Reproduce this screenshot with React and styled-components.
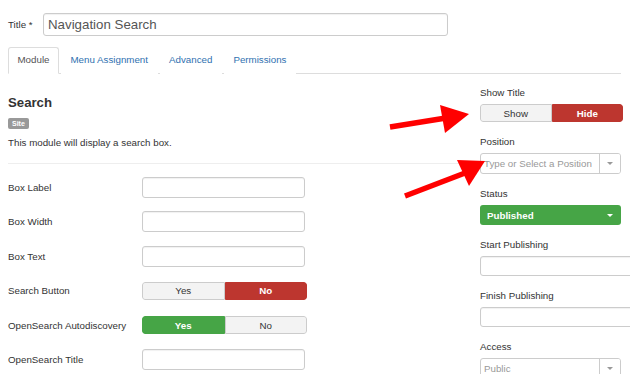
import React from 'react'
import styled, { createGlobalStyle } from 'styled-components'

const GlobalStyle = createGlobalStyle`
  html, body {
    margin: 0;
    padding: 0;
    background: #fff;
  }
  body {
    font-family: "Liberation Sans", Arial, sans-serif;
    color: #333;
  }
`

const Page = styled.div`
  position: relative;
  width: 630px;
  height: 374px;
  overflow: hidden;
  padding: 13px 0 0 8px;
  box-sizing: border-box;
  font-size: 9.75px;
`

const TitleRow = styled.div`
  display: flex;
  align-items: center;
  height: 23px;
`

const TitleLabel = styled.label`
  width: 35px;
  font-size: 9.75px;
  color: #333;
`

const TextInput = styled.input`
  box-sizing: border-box;
  width: ${p => p.$width || 163}px;
  height: ${p => p.$height || 20}px;
  margin: 0;
  padding: 0 4px;
  border: 1px solid #ccc;
  border-radius: 3px;
  box-shadow: inset 0 1px 1px rgba(0, 0, 0, 0.06);
  font-family: "Liberation Sans", Arial, sans-serif;
  font-size: ${p => p.$size || 9.75}px;
  color: #555;
  background: #fff;
  outline: none;
`

const Tabs = styled.div`
  display: flex;
  margin-top: 11px;
  width: 613px;
  height: 26px;
  border-bottom: 1px solid #ddd;
`

const Tab = styled.div`
  box-sizing: border-box;
  height: 27px;
  padding: 0 8.5px;
  margin-right: 2px;
  line-height: 24px;
  border: 1px solid ${p => (p.$active ? '#ddd' : 'transparent')};
  border-bottom-color: ${p => (p.$active ? '#fff' : 'transparent')};
  border-radius: 3px 3px 0 0;
  background: #fff;
  color: ${p => (p.$active ? '#555' : '#3071b0')};
`

const Body = styled.div`
  display: grid;
  grid-template-columns: 462px 141px;
  column-gap: 10px;
`

const LeftCol = styled.div`
  display: flex;
  flex-direction: column;
`

const Heading = styled.h2`
  margin: 21px 0 0;
  font-size: 13.2px;
  line-height: 16px;
  font-weight: bold;
  color: #333;
`

const Badge = styled.span`
  align-self: flex-start;
  margin-top: 7px;
  height: 11px;
  padding: 0 4px;
  border-radius: 2px;
  background: #999;
  color: #fff;
  font-size: 7px;
  font-weight: bold;
  line-height: 11px;
`

const Desc = styled.p`
  margin: 7px 0 0;
  line-height: 14px;
  color: #333;
`

const Divider = styled.hr`
  margin: 13px 0 0;
  border: 0;
  border-top: 1px solid #eee;
`

const Rows = styled.div`
  display: flex;
  flex-direction: column;
  gap: 13.4px;
  margin-top: 13px;
`

const Row = styled.div`
  display: grid;
  grid-template-columns: 134px auto;
  align-items: center;
  height: 21px;
`

const RowLabel = styled.label`
  color: #333;
`

const Toggle = styled.div`
  display: flex;
  width: ${p => p.$width}px;
  height: 18px;
  border-radius: 3px;
  overflow: hidden;
`

const ToggleOption = styled.div`
  flex: 1;
  display: flex;
  align-items: center;
  justify-content: center;
  box-sizing: border-box;
  border: 1px solid ${p => (p.$tone === 'red' ? '#bd362f' : p.$tone === 'green' ? '#46a546' : '#ccc')};
  background: ${p => (p.$tone === 'red' ? '#bd362f' : p.$tone === 'green' ? '#46a546' : '#f3f3f3')};
  color: ${p => (p.$tone ? '#fff' : '#333')};
  font-weight: ${p => (p.$tone ? 'bold' : 'normal')};
  &:first-child {
    border-radius: 3px 0 0 3px;
  }
  &:last-child {
    border-radius: 0 3px 3px 0;
  }
`

const RightCol = styled.div`
  display: flex;
  flex-direction: column;
  padding-top: 12px;
`

const Field = styled.div`
  display: flex;
  flex-direction: column;
  margin-bottom: 13px;
`

const FieldLabel = styled.label`
  line-height: 14px;
  margin-bottom: 4px;
  color: #333;
`

const Combo = styled.div`
  display: flex;
  box-sizing: border-box;
  width: 141px;
  height: ${p => p.$height || 20}px;
  border: 1px solid #ccc;
  border-radius: 3px;
  background: #fff;
  overflow: hidden;
`

const ComboText = styled.div`
  flex: 1;
  display: flex;
  align-items: center;
  padding-left: 3px;
  color: #999;
  white-space: nowrap;
  overflow: hidden;
`

const ComboButton = styled.div`
  width: 20px;
  display: flex;
  align-items: center;
  justify-content: center;
  border-left: 1px solid #ccc;
  background: #fff;
`

const Caret = styled.span`
  width: 0;
  height: 0;
  border-left: 3.5px solid transparent;
  border-right: 3.5px solid transparent;
  border-top: 3.5px solid ${p => p.$color || '#999'};
`

const StatusSelect = styled.div`
  display: flex;
  align-items: center;
  justify-content: space-between;
  box-sizing: border-box;
  width: 141px;
  height: 20px;
  padding: 0 8px 0 7px;
  border-radius: 3px;
  background: #46a546;
  color: #fff;
  font-weight: bold;
`

const Arrows = styled.svg`
  position: absolute;
  left: 0;
  top: 0;
  pointer-events: none;
`

const leftRows = [
  { label: 'Box Label', type: 'input' },
  { label: 'Box Width', type: 'input' },
  { label: 'Box Text', type: 'input' },
  { label: 'Search Button', type: 'toggle', options: [['Yes', null], ['No', 'red']] },
  { label: 'OpenSearch Autodiscovery', type: 'toggle', options: [['Yes', 'green'], ['No', null]] },
  { label: 'OpenSearch Title', type: 'input' },
]

export default function App() {
  return (
    <Page>
      <GlobalStyle />
      <TitleRow>
        <TitleLabel>Title *</TitleLabel>
        <TextInput $width={405} $height={23} $size={13.3} defaultValue="Navigation Search" readOnly />
      </TitleRow>

      <Tabs>
        <Tab $active>Module</Tab>
        <Tab>Menu Assignment</Tab>
        <Tab>Advanced</Tab>
        <Tab>Permissions</Tab>
      </Tabs>

      <Body>
        <LeftCol>
          <Heading>Search</Heading>
          <Badge>Site</Badge>
          <Desc>This module will display a search box.</Desc>
          <Divider />
          <Rows>
            {leftRows.map(row => (
              <Row key={row.label}>
                <RowLabel>{row.label}</RowLabel>
                {row.type === 'input' ? (
                  <TextInput $width={163} $height={21} readOnly />
                ) : (
                  <Toggle $width={165}>
                    {row.options.map(([text, tone]) => (
                      <ToggleOption key={text} $tone={tone}>{text}</ToggleOption>
                    ))}
                  </Toggle>
                )}
              </Row>
            ))}
          </Rows>
        </LeftCol>

        <RightCol>
          <Field>
            <FieldLabel>Show Title</FieldLabel>
            <Toggle $width={143}>
              <ToggleOption>Show</ToggleOption>
              <ToggleOption $tone="red">Hide</ToggleOption>
            </Toggle>
          </Field>
          <Field>
            <FieldLabel>Position</FieldLabel>
            <Combo $height={21}>
              <ComboText>Type or Select a Position</ComboText>
              <ComboButton><Caret /></ComboButton>
            </Combo>
          </Field>
          <Field>
            <FieldLabel>Status</FieldLabel>
            <StatusSelect>
              Published
              <Caret $color="#fff" />
            </StatusSelect>
          </Field>
          <Field>
            <FieldLabel>Start Publishing</FieldLabel>
            <TextInput $width={170} $height={20} readOnly />
          </Field>
          <Field>
            <FieldLabel>Finish Publishing</FieldLabel>
            <TextInput $width={170} $height={20} readOnly />
          </Field>
          <Field>
            <FieldLabel>Access</FieldLabel>
            <Combo>
              <ComboText>Public</ComboText>
              <ComboButton><Caret /></ComboButton>
            </Combo>
          </Field>
        </RightCol>
      </Body>

      <Arrows width="630" height="374" viewBox="0 0 630 374">
        <line x1="390" y1="127" x2="446" y2="118" stroke="#ff0000" strokeWidth="5.5" />
        <polygon points="440,105 469,114 445,133" fill="#ff0000" />
        <line x1="405" y1="196" x2="465" y2="173" stroke="#ff0000" strokeWidth="5.5" />
        <polygon points="457,160 485,161 469,186" fill="#ff0000" />
      </Arrows>
    </Page>
  )
}
